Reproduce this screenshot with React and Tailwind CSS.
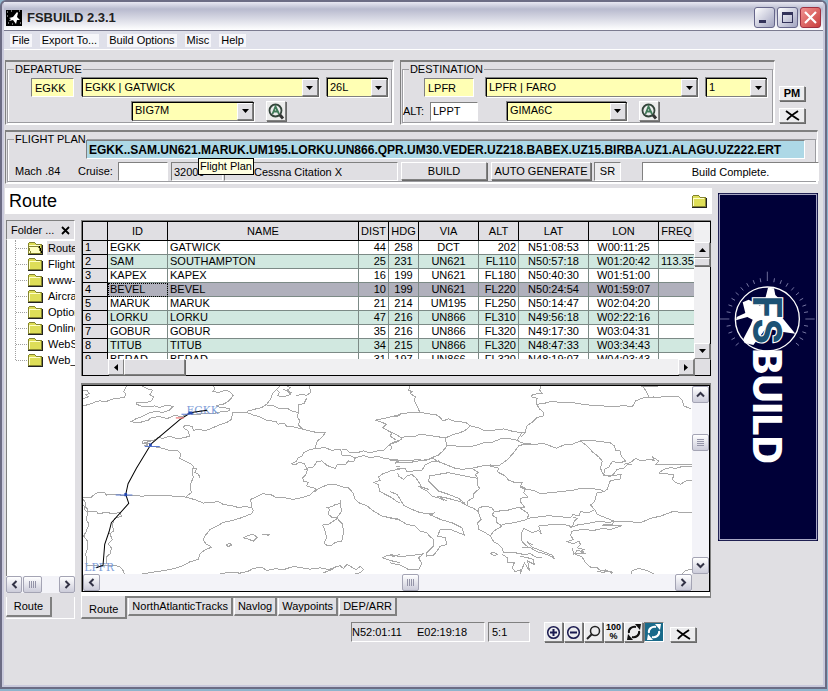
import { useState } from 'react';

const sunken = 'border border-t-[#808080] border-l-[#808080] border-r-white border-b-white';
const raised = 'border border-t-white border-l-white border-r-[#808080] border-b-[#808080] shadow-[1px_1px_0_#6a6a6a]';
const xpButton = 'flex items-center justify-center rounded-xs border border-[#a4a4b4] bg-linear-to-b from-white to-[#ccccda]';

const waypoints = [
  ['EGKK', 'GATWICK', '44', '258', 'DCT', '202', 'N51:08:53', 'W00:11:25', ''],
  ['SAM', 'SOUTHAMPTON', '25', '231', 'UN621', 'FL110', 'N50:57:18', 'W01:20:42', '113.35'],
  ['KAPEX', 'KAPEX', '16', '199', 'UN621', 'FL180', 'N50:40:30', 'W01:51:00', ''],
  ['BEVEL', 'BEVEL', '10', '199', 'UN621', 'FL220', 'N50:24:54', 'W01:59:07', ''],
  ['MARUK', 'MARUK', '21', '214', 'UM195', 'FL250', 'N50:14:47', 'W02:04:20', ''],
  ['LORKU', 'LORKU', '47', '216', 'UN866', 'FL310', 'N49:56:18', 'W02:22:16', ''],
  ['GOBUR', 'GOBUR', '35', '216', 'UN866', 'FL320', 'N49:17:30', 'W03:04:31', ''],
  ['TITUB', 'TITUB', '34', '215', 'UN866', 'FL320', 'N48:47:33', 'W03:34:43', ''],
  ['BERAD', 'BERAD', '31', '197', 'UN866', 'FL320', 'N48:19:07', 'W04:03:43', ''],
];

const columns = [
  { name: 'ID', width: 'w-[60px]', cell: 'text-left' },
  { name: 'NAME', width: '', cell: 'text-left' },
  { name: 'DIST', width: 'w-[30px]', cell: 'text-right' },
  { name: 'HDG', width: 'w-[30px]', cell: 'text-center' },
  { name: 'VIA', width: 'w-[60px]', cell: 'text-center' },
  { name: 'ALT', width: 'w-[40px]', cell: 'text-right' },
  { name: 'LAT', width: 'w-[70px]', cell: 'text-center' },
  { name: 'LON', width: 'w-[70px]', cell: 'text-center' },
  { name: 'FREQ', width: 'w-[35px]', cell: 'text-left' },
];

const folders = ['Route', 'Flight Plans', 'www-Links', 'Aircraft', 'Options', 'Online', 'WebSites', 'Web_Pages'];
const tabs = ['Route', 'NorthAtlanticTracks', 'Navlog', 'Waypoints', 'DEP/ARR'];

const Combo = ({ label, value, className }) => (
  <div className={`flex h-[19px] border border-t-black border-l-black border-r-[#404040] border-b-[#808080] bg-[#ffffb4] shadow-[1px_1px_0_#fff,-1px_-1px_0_#808080] ${className}`}>
    <select aria-label={label} className="min-w-0 flex-1 appearance-none bg-transparent pb-[2px] pl-[2px] leading-[14px] outline-none">
      <option>{value}</option>
    </select>
    <span className={`flex w-4 items-center justify-center bg-[#e0dfe3] ${raised}`}>
      <svg width="7" height="4" aria-hidden="true"><path d="M0 0h7L3.500 4z" /></svg>
    </span>
  </div>
);

const Folder = ({ open }) => (
  <svg width="16" height="14" viewBox="0 0 16 14" shapeRendering="crispEdges" aria-hidden="true" className="shrink-0">
    <path d="M1 12.500V3l2-2h4l2 2h5v9.500z" fill="#dede58" stroke="#848430" />
    <path d="M2 4h11M2 4v8" stroke="#ffffc8" fill="none" />
    <path d="M1 13h14V4" stroke="#222" fill="none" />
    {open && <path d="M1 5h10l3 7H4z" fill="#ffffc0" stroke="#848430" />}
    {open && <path d="M12 5l3 7" stroke="#000" />}
  </svg>
);

const SearchButton = ({ label }) => (
  <button aria-label={label} className={`flex size-5 items-center justify-center bg-[#ececec] ${raised}`}>
    <svg width="18" height="18" viewBox="0 0 18 18" fill="none" aria-hidden="true">
      <circle cx="8.500" cy="8.500" r="6" stroke="#33443a" strokeWidth="1.800" />
      <path d="M13 13l3 3.500" stroke="#333" strokeWidth="3" />
      <path d="M5.500 12l3-7.500L12 12M7 9.500h4" stroke="#3f7a58" strokeWidth="1.800" />
    </svg>
  </button>
);

const CrossIcon = () => (
  <svg width="15" height="11" viewBox="0 0 15 11" fill="none" stroke="#000" strokeWidth="1.800" aria-hidden="true">
    <path d="M1 1c4 3 8 6 13 9M13 1C9 4 5 6 2 10" />
  </svg>
);

const Chevron = ({ d }) => (
  <svg width="9" height="9" viewBox="0 0 9 9" fill="none" stroke="#333346" strokeWidth="2" aria-hidden="true"><path d={d} /></svg>
);

const LEFT = 'M6.500 1 3 4.500 6.500 8';
const RIGHT = 'M2.500 1 6 4.500 2.500 8';
const UP = 'M1 6.500 4.500 3 8 6.500';
const DOWN = 'M1 2.500 4.500 6 8 2.500';

const TitleBar = () => (
  <header className="flex h-[29px] items-center border-b border-[#7b7b90] bg-linear-to-b from-[#e8e8f2] via-[#b8bace] via-25% to-white px-[2px]">
    <svg width="16" height="16" viewBox="0 0 16 16" className="mt-1" aria-hidden="true">
      <path d="M0 0h16v16H0z" />
      <path d="M3 8l4-1 4-5 1 1-1 4 3 3-3 0-1 4-3-4-4 1 2-2z" fill="#fff" />
      <path d="M1 2h1M5 1h1M13 1h1M2 13h1M14 13h1M6 14h1M1 6h1" stroke="#ddd" />
    </svg>
    <h1 className="mt-1 ml-[5px] flex-1 text-[13px] font-bold text-[#222]">FSBUILD 2.3.1</h1>
    <div className="mt-[3px] flex gap-[2px]">
      <button aria-label="Minimize" className="flex size-[21px] items-end rounded-[3px] border border-[#66668a] bg-linear-to-br from-white to-[#a2a4c0] p-1">
        <span className="h-[3px] w-[7px] bg-[#33335a]" />
      </button>
      <button aria-label="Maximize" className="flex size-[21px] items-center justify-center rounded-[3px] border border-[#66668a] bg-linear-to-br from-white to-[#a2a4c0]">
        <span className="h-[11px] w-[11px] border border-t-[3px] border-[#33335a]" />
      </button>
      <button aria-label="Close" className="flex size-[21px] items-center justify-center rounded-[3px] border border-[#a03040] bg-linear-to-br from-[#f09090] to-[#c83c3c]">
        <svg width="13" height="13" viewBox="0 0 13 13" stroke="#fff" strokeWidth="2.200" aria-hidden="true"><path d="M1 1l11 11M12 1L1 12" /></svg>
      </button>
    </div>
  </header>
);

const Panel = ({ title, className, children }) => (
  <section className={`border border-t-2 border-t-[#808080] border-l-[#808080] border-r-white border-b-white p-px pt-0 ${className}`}>
    <fieldset className="min-w-0 border border-[#9c9ca0] shadow-[inset_1px_0_0_#fff,1px_1px_0_#fff]">
      <legend className="ml-[6px] px-px leading-[14px]">{title}</legend>
      {children}
    </fieldset>
  </section>
);

const FlightPlan = () => (
  <Panel title="FLIGHT PLAN" className="mt-[5px] mr-[5px]">
    <div className="relative -mt-[6px] ml-[78px] mr-[10px]">
      <input
        aria-label="Flight Plan"
        readOnly
        value="EGKK..SAM.UN621.MARUK.UM195.LORKU.UN866.QPR.UM30.VEDER.UZ218.BABEX.UZ15.BIRBA.UZ1.ALAGU.UZ222.ERT"
        className={`block h-[19px] w-full bg-[#add8e6] px-[2px] text-[12px] font-bold outline-none ${sunken}`}
      />
      <div role="tooltip" className="absolute top-[18px] left-[112px] z-10 border border-black bg-[#ffffe1] px-px leading-[15px] whitespace-nowrap">Flight Plan</div>
    </div>
    <div className="-mr-[4px] mt-[2px] flex h-[20px] items-center pl-[7px]">
      <span className="w-[63px]">Mach .84</span>
      <label htmlFor="cruise" className="w-[40px]">Cruise:</label>
      <input id="cruise" className={`h-[19px] w-[50px] bg-white px-1 outline-none ${sunken}`} />
      <span className={`ml-[3px] h-[19px] w-[52px] px-[2px] leading-[18px] ${sunken}`}>32000</span>
      <span className={`ml-px h-[19px] flex-1 pl-[29px] leading-[18px] whitespace-nowrap ${sunken}`}>Cessna Citation X</span>
      <button className={`ml-[3px] h-[18px] w-[86px] ${raised}`}>BUILD</button>
      <button className={`ml-1 h-[18px] w-[100px] whitespace-nowrap ${raised}`}>AUTO GENERATE</button>
      <button aria-pressed="true" className={`ml-[3px] h-[19px] w-[27px] bg-[#ececee] ${sunken}`}>SR</button>
      <output className={`ml-[21px] h-[19px] w-[177px] bg-white text-center leading-[18px] ${sunken}`}>Build Complete.</output>
    </div>
  </Panel>
);

const Grip = () => (
  <svg width="8" height="7" stroke="#9494a8" shapeRendering="crispEdges" aria-hidden="true"><path d="M.500 0v7M2.500 0v7M4.500 0v7M6.500 0v7" /></svg>
);

const Sidebar = () => (
  <nav className="flex w-[69px] shrink-0 flex-col">
    <div className={`flex h-[20px] items-center justify-between px-1 ${sunken}`}>
      <span>Folder ...</span>
      <button aria-label="Close folders">
        <svg width="9" height="9" viewBox="0 0 9 9" stroke="#000" strokeWidth="1.800" aria-hidden="true"><path d="M1 1l7 7M8 1L1 8" /></svg>
      </button>
    </div>
    <div className="flex-1 overflow-hidden border-l border-[#808080] bg-white">
      <ul className="ml-2 h-[120px] border-l border-dotted border-[#a0a0a0]">
        {folders.map((f, i) => (
          <li key={f} className="flex h-4 items-center">
            <span className="w-[11px] shrink-0 border-t border-dotted border-[#a0a0a0]" />
            <Folder open={i === 0} />
            <a href="#" className={i === 0 ? 'ml-1 bg-[#e0dfe3] px-px whitespace-nowrap' : 'ml-1 px-px whitespace-nowrap'}>{f}</a>
          </li>
        ))}
      </ul>
    </div>
    <div className="flex h-[17px] justify-between bg-[#f3f3f8]">
      <button aria-label="Scroll left" className={`w-4 ${xpButton}`}><Chevron d={LEFT} /></button>
      <span className={`mr-auto ml-px w-[19px] ${xpButton}`}><Grip /></span>
      <button aria-label="Scroll right" className={`w-4 ${xpButton}`}><Chevron d={RIGHT} /></button>
    </div>
    <div className="mt-1 h-[22px] border-r border-b border-white bg-[#e0dfe3]">
      <button className="h-[20px] w-[46px] border-r-2 border-b-2 border-l border-r-[#808080] border-b-[#808080] border-l-white">Route</button>
    </div>
  </nav>
);

const RouteTable = () => {
  const [selected, setSelected] = useState(3);
  const oldButton = `flex items-center justify-center bg-[#e0dfe3] ${raised}`;

  return (
    <div className="border-t border-l border-[#808080]">
      <div className="border border-black">
        <div className="flex h-[137px]">
          <div className="min-w-0 flex-1 overflow-hidden">
            <table className="w-full table-fixed border-separate border-spacing-0">
              <thead>
                <tr className="h-[19px] bg-[#e0dfe3]">
                  <th className="w-[25px] border-r border-b border-black" aria-label="Row" />
                  {columns.map((c) => (
                    <th key={c.name} className={`overflow-hidden border-r border-b border-black p-0 text-center leading-[18px] font-normal last:border-r-0 ${c.width}`}>{c.name}</th>
                  ))}
                </tr>
              </thead>
              <tbody>
                {waypoints.map((row, i) => (
                  <tr key={row[0]} onClick={() => setSelected(i)} className={i === selected ? 'bg-[#b0b0bc]' : i % 2 ? 'bg-[#d1e8e0]' : 'bg-white'}>
                    <th className="border-r border-b border-black bg-[#e0dfe3] p-0 pl-[2px] text-left leading-[13px] font-normal">{i + 1}</th>
                    {row.map((value, j) => (
                      <td
                        key={j}
                        className={`overflow-hidden border-r border-b border-[#7c8a86] p-0 px-[2px] leading-[13px] whitespace-nowrap last:border-r-0 ${columns[j].cell} ${i === selected && j === 0 ? 'outline-1 -outline-offset-1 outline-black outline-dotted' : ''}`}
                      >
                        {value}
                      </td>
                    ))}
                  </tr>
                ))}
              </tbody>
            </table>
          </div>
          <div className="flex w-4 flex-col bg-[#f0f0f2] pt-[20px]">
            <button aria-label="Scroll up" className={`h-4 ${oldButton}`}><svg width="7" height="4" aria-hidden="true"><path d="M0 4h7L3.500 0z" /></svg></button>
            <span className={`h-2 ${oldButton}`} />
            <button aria-label="Scroll down" className={`mt-auto h-4 ${oldButton}`}><svg width="7" height="4" aria-hidden="true"><path d="M0 0h7L3.500 4z" /></svg></button>
          </div>
        </div>
        <div className="flex h-4 bg-[#f0f0f2]">
          <span className="w-[25px] bg-[#e0dfe3]" />
          <button aria-label="Scroll left" className={`w-4 ${oldButton}`}><svg width="4" height="7" aria-hidden="true"><path d="M4 0v7L0 3.500z" /></svg></button>
          <span className={`w-[61px] ${oldButton}`} />
          <button aria-label="Scroll right" className={`ml-auto w-4 ${oldButton}`}><svg width="4" height="7" aria-hidden="true"><path d="M0 0v7L4 3.500z" /></svg></button>
          <span className="w-4 border-l border-[#808080] bg-[#e0dfe3]" />
        </div>
      </div>
    </div>
  );
};

// Coast lines and borders, western half
const west = [
  'M10 75L30 70 45 64 60 60 80 62 95 55 115 52 133 50 138 40 132 32 140 15',
  'M10 30L22 28 28 38 18 42 26 48 10 54',
  'M185 15L205 25 218 28 210 42 222 48 215 60 200 65 172 64 170 70 185 76 205 78 225 75 240 80 258 74 280 76 268 88 250 94 225 92 205 97 185 108 172 112 153 122 175 126 205 118 215 110 240 107 262 113 285 103 305 108 325 98 350 102 375 97 400 98 425 92 450 90 448 82 420 80 410 74 430 70 445 62 460 45 452 34 438 28 418 34 398 33 405 24 400 15',
  'M500 95L480 94 458 95 455 115 440 125 418 132 400 140 375 150 358 145 340 148 338 136 315 134 310 140 325 150 330 166 312 170 292 174 270 166 250 172 235 170 218 180 190 178 188 188 212 186 195 194 212 196 240 200 255 204 275 210 295 210 302 218 300 232 318 242 332 248 340 256 338 272 340 290 332 310 334 335 318 348',
  'M340 262L350 264 345 274 356 280 360 290M192 184L215 182M200 190L208 179',
  'M10 350L35 348 50 336 75 335 80 342 108 340 130 343 165 342 185 346 210 343 240 345 262 342 285 347 318 348 345 356 370 366 395 364 415 362 430 370 455 374 478 380 495 376 515 380',
  'M516 380L512 355 528 348 548 338 575 342 590 350 612 350 640 355 665 350 690 342 700 332 722 320 745 310 770 312 788 318 805 320 818 335 825 355 838 366 860 374 880 390 905 405 930 410 960 415',
  'M515 380L520 388 515 398 490 408 460 418 430 424 410 436 390 446 375 465 370 475 378 488 395 498 372 508 360 520 355 535 330 542 310 553 285 562 255 568 225 572 190 578 170 582',
  'M10 372L22 382 25 392 50 390 55 398 80 394 100 398 120 394 125 405 105 412 98 430 102 450 90 458 98 475 85 488 95 500 92 518 82 525 80 548',
  'M10 355L18 365 14 385 24 395 20 415 28 430 20 450 12 465 22 478 24 500 18 520 22 540 20 555 35 553 65 555 98 552 120 556 130 568 135 582',
  'M500 92L520 86 545 80 560 70 572 55 578 38 590 25 600 15M592 42L600 48 620 45 632 40 622 30 608 24M620 16L632 20 622 28 635 36M648 45L665 40 680 44 692 34 688 15M592 28L598 35 592 45',
  'M560 73L582 75 600 84 622 82 635 90 655 95 652 108 660 120 655 132 668 145 690 150 715 156 735 156 725 170 712 180 705 200',
  'M500 94L518 102 540 108 560 118 588 122 595 130 612 126 620 136 640 138 668 145M655 95L655 72 672 68 680 52',
  'M705 203L690 206 670 215 668 224 655 230 650 240 635 248 645 252 658 244 672 248 680 262 700 258 710 242 725 240 742 254 765 262 772 250 795 252 805 240 820 243 825 232 812 225 785 222 782 205 755 208 735 200 705 203',
  'M785 205L800 206 808 215 835 214 850 210 870 216 890 210 910 208 930 190 958 180M825 230L850 224 870 230 895 226 910 232 935 235 960 238',
  'M672 264L682 266 678 280 668 290 670 300 685 304 680 315 705 322 708 332',
  'M885 118L905 124 918 130 908 140 935 156 930 165 948 178M885 118L915 112 940 106 960 105',
  'M960 264L930 270 905 280 895 288 900 298 882 304 895 312 898 330 915 340 935 350 950 362 960 365M945 246L960 245M948 258L960 258',
  'M780 358L782 375 784 392 770 410 755 408 745 400 748 385 742 380 758 376 765 370 780 368z',
  'M772 412L778 420 788 430 790 455 785 480 765 484 755 492 740 492 732 486 740 470 735 450 728 432 745 430 760 420z',
  'M490 470L508 462 518 460 532 468 520 480 505 474zM438 492L448 486 456 492 445 496zM545 460L568 460 560 466',
  'M408 582L430 576 460 574 480 576 505 570 520 562 545 558 560 568 585 563 612 565 640 556 665 560 690 564 720 560 745 565 765 558 780 554 790 562 800 550 815 558 828 566 840 556 850 565 840 575 820 580M730 575L755 565 770 555',
  'M905 530L925 522 940 526 960 520M908 530L930 538 960 545',
];

// Eastern half, drawn in its own frame
const east = [
  'M60 15L55 28 65 32 60 38 75 48 72 60 80 75 88 92',
  'M0 108L18 104 35 98 65 95 88 94 110 98 138 102 150 110 158 120 175 114 195 122 225 124 240 135 262 140 285 150 310 148 340 144 370 152 395 155 406 153',
  'M0 152L20 162 35 172 45 166 70 168 90 160 120 164 145 168 168 170 185 162 210 155 225 148 240 135',
  'M0 208L5 200 0 190 10 184 35 175M0 238L30 238 52 240 85 235 105 240 125 230 145 222 158 210 170 195 165 172',
  'M170 195L195 195 220 198 250 195 280 186 305 184 330 174 350 172 380 178 388 166 395 155',
  'M380 178L395 186 430 190 400 190 385 195 370 215 352 235 325 255 300 252 275 255 245 262 215 265 195 262 165 250 140 240 125 230',
  'M452 15L448 28 455 38 428 40 422 48 440 52 438 70 448 85 460 95 460 105 440 110 428 122 408 136 405 155 392 168',
  'M438 70L460 68 480 62 510 64 550 66 590 72 615 74 650 76 670 78 700 74 725 78 735 60 760 50 800 50 830 46 862 46 875 58 880 75 902 85M755 15L768 32 775 50 790 48M750 18L780 16 802 18',
  'M400 188L430 190 460 188 480 195 498 202 520 192 545 190 570 180 600 178 630 182 660 186 672 195 675 208 688 210 692 225 705 240 690 245 665 242 655 258 642 265 640 280 650 285 665 284 680 265 700 262 712 250 725 252',
  'M570 180L590 195 605 212 625 228 635 240 630 262 640 285',
  'M700 250L720 245 735 232 752 240 775 235 790 238 786 228 795 234 805 240 795 252 815 250 840 250 870 252 903 250',
  'M903 258L870 258 855 262 840 260 820 265 805 276 825 278 850 282 845 295 855 305 870 310 885 300 903 298',
  'M640 282L655 286 680 282 692 280 688 295 660 298 655 310 650 325 640 332 620 335 615 350 612 362 600 372 612 385 620 400 645 410 670 420 700 420 750 425 780 412 810 405 845 392 903 395',
  'M390 318L405 325 430 328 450 338 480 335 510 332 545 328 570 322 600 322 630 326 640 332',
  'M300 255L325 262 320 272 345 285 355 298 375 305 395 305 390 315 405 322 400 335 412 348 390 352 392 365 402 378 390 382 410 395 415 402 410 412',
  'M325 390L350 388 380 380 400 380M410 412L440 408 475 404 500 406 540 410 548 400 565 405 570 392 595 395 612 386',
  'M15 250L18 242 50 246 85 240 130 232M20 262L45 262 50 272 70 270 95 268 105 252 125 242 145 240',
  'M22 275L25 285 40 295 50 285 65 280 78 292 90 310 90 320 110 330 125 345 150 352 165 350 185 355 210 362 230 374 250 382 265 392',
  'M118 285L145 280 175 275 200 280 240 288 262 292 260 312 268 322 250 338 250 350 232 360 230 372M118 285L115 300 130 315 145 330 175 340 205 352 225 368M85 315L115 325M140 345L165 350M145 352L170 358M150 346L160 360',
  'M245 262L265 275 255 280 262 292M265 380L285 375 305 380 312 392 305 402 318 410 320 425 335 435 310 450 300 465 285 455 265 445 262 425 272 415 265 395 265 380M312 392L330 390',
  'M335 430L370 425 410 415M300 465L310 482 325 490 335 500 340 515 370 514 400 520 420 518 440 530 455 528M300 516L312 514 320 520 310 524z',
  'M335 520L352 530 350 545 372 545 365 560 375 572 392 565 390 578 402 545 418 570 412 540 432 550 428 535 412 530 390 525',
  'M415 500L395 482 392 460 400 442 412 448 425 455 445 448 452 458 445 435 470 432 500 430 530 432 545 438 552 420 560 412 548 408',
  'M395 500L420 500 440 512 470 520 492 532 485 522 450 508 425 498 410 482 428 492',
  'M540 440L560 432 585 428 610 424 625 420 650 424 670 422 665 430 635 432 695 434 660 445 635 442 610 448 575 445 545 450 540 462 548 475 530 482 550 488 565 480 570 490 560 500 580 505 570 512 585 518 548 516 575 528 585 545 600 558 620 560 630 568 665 572M545 500L550 520 560 508 580 512',
  'M720 582L725 568 745 562 770 568 792 580M870 582L885 568 903 564M620 570L640 575 645 566 665 575 662 582',
  'M0 332L20 340 30 355 40 372 65 385 90 395 115 398 150 415 185 425 215 440 222 462 205 455 180 445 150 445 142 465 165 470 170 490 150 495 140 510 130 522 108 525 110 515 130 495 130 475 118 465 110 455 90 450 75 435 50 430 25 415 0 412',
  'M100 518L85 530 95 548 85 566 55 565 30 552 0 545M0 520L25 526 60 524 100 518M115 398L130 396 120 405',
];

const RouteMap = () => (
  <svg viewBox="10 15 1824 564" preserveAspectRatio="xMidYMid slice" className="h-[188px] min-w-0 flex-1 bg-white" role="img" aria-label="Route map" fill="none">
    <g stroke="#a8a8a8" strokeWidth="3" shapeRendering="crispEdges">
      {west.map((d, i) => <path key={i} d={d} />)}
      <g transform="translate(930 0)">
        {east.map((d, i) => <path key={i} d={d} />)}
      </g>
    </g>
    <g fill="#7b9bd8" fontFamily="'DejaVu Serif', serif" fontSize="32">
      <text x="320" y="98">EGKK</text>
      <text x="14" y="571">LPFR</text>
    </g>
    <path d="M382 88L340 94 325 100 300 116 215 188 170 262 145 308 138 340 147 367 95 425 88 452 75 490 70 552 50 560" stroke="#000" strokeWidth="3" />
    <path d="M108 342h50M195 197h45M305 100h35" stroke="#5a7ad0" strokeWidth="3" />
    <path d="M288 111h24" stroke="#f08080" strokeWidth="4" />
    <path d="M134 336h8v10h-8zM208 188h8v8h-8zM326 92h12v7h-12z" fill="#2448b0" />
  </svg>
);

const MapPanel = () => (
  <div className="border-t-2 border-l border-[#808080]">
    <div className="border border-black bg-white">
      <div className="flex">
        <RouteMap />
        <div className="flex w-[17px] flex-col bg-[#f3f3f8]">
          <button aria-label="Map up" className={`h-[17px] ${xpButton}`}><Chevron d={UP} /></button>
          <span className={`mt-[31px] h-[17px] ${xpButton}`}>
            <svg width="7" height="8" stroke="#9494a8" shapeRendering="crispEdges" aria-hidden="true"><path d="M0 .500h7M0 2.500h7M0 4.500h7M0 6.500h7" /></svg>
          </span>
          <button aria-label="Map down" className={`mt-auto h-[17px] ${xpButton}`}><Chevron d={DOWN} /></button>
        </div>
      </div>
      <div className="flex h-[17px] items-stretch bg-[#f3f3f8]">
        <button aria-label="Map left" className={`w-[17px] ${xpButton}`}><Chevron d={LEFT} /></button>
        <div className="flex flex-1 justify-center pl-[46px]"><span className={`w-[17px] ${xpButton}`}><Grip /></span></div>
        <button aria-label="Map right" className={`w-[17px] ${xpButton}`}><Chevron d={RIGHT} /></button>
        <span className="w-[17px] bg-[#e0dfe3]" />
      </div>
    </div>
  </div>
);

const Arrows = ({ color }) => (
  <svg width="16" height="16" viewBox="0 0 16 16" fill="none" stroke={color} strokeWidth="2" aria-hidden="true">
    <path d="M3 9C2 5 6 2 10 3M13 7c1 4-3 7-7 6" />
    <path d="M9 0l6 0-1 6zM7 16l-6 0 1-6z" fill={color} stroke="none" />
  </svg>
);

const StatusBar = () => {
  const tool = `flex h-5 w-[19px] items-center justify-center overflow-hidden bg-[#ececee] ${raised}`;

  return (
    <div className="mt-[3px] flex items-end justify-end pr-4">
      <output className={`flex h-5 w-[134px] items-center gap-[15px] ${sunken}`}><span>N52:01:11</span><span>E02:19:18</span></output>
      <output className={`ml-[3px] flex h-5 w-[42px] items-center pl-[3px] ${sunken}`}>5:1</output>
      <div className="ml-[14px] flex gap-px">
        <button aria-label="Zoom in" className={tool}>
          <svg width="15" height="15" viewBox="0 0 15 15" fill="none" stroke="#1a1a50" strokeWidth="1.500" aria-hidden="true"><circle cx="7.500" cy="7.500" r="5.800" /><path d="M4 7.500h7M7.500 4v7" strokeWidth="2" /></svg>
        </button>
        <button aria-label="Zoom out" className={tool}>
          <svg width="15" height="15" viewBox="0 0 15 15" fill="none" stroke="#1a1a50" strokeWidth="1.500" aria-hidden="true"><circle cx="7.500" cy="7.500" r="5.800" /><path d="M4 7.500h7" strokeWidth="2" /></svg>
        </button>
        <button aria-label="Zoom window" className={tool}>
          <svg width="15" height="15" viewBox="0 0 15 15" fill="none" stroke="#222" strokeWidth="1.500" aria-hidden="true"><circle cx="9" cy="6" r="4.500" /><path d="M6 9l-5 5" strokeWidth="2" /></svg>
        </button>
        <button aria-label="Zoom 100%" className={`${tool} flex-col text-[9px] leading-[9px] font-bold`}><span>100</span><span>%</span></button>
        <button aria-label="Refresh" className={tool}><Arrows color="#111" /></button>
        <button aria-label="Auto refresh" aria-pressed="true" className={`flex size-5 items-center justify-center bg-[#1a6a8a] ${sunken}`}><Arrows color="#fff" /></button>
      </div>
      <button aria-label="Close route" className={`ml-[6px] flex h-[15px] w-[26px] items-center justify-center bg-[#ececee] ${raised}`}><CrossIcon /></button>
    </div>
  );
};

const Banner = () => (
  <aside className="w-[111px] shrink-0 pt-[5px] pr-[5px] pl-[6px]">
    <svg viewBox="24 24 300 1044" className="w-full" role="img" aria-label="FSBuild">
      <path d="M24 24h300v1044H24z" fill="#000038" />
      <path d="M28 28h292v1036H28z" fill="none" stroke="#c8c8e0" strokeWidth="3" />
      <g stroke="#a0a0c8" strokeWidth="2">
        {Array.from({ length: 36 }, (_, i) => i).filter((i) => i < 14 || i > 22).map((i) => (
          <path key={i} d={i % 9 === 0 ? 'M172 260V288' : 'M172 278V290'} transform={`rotate(${i * 10} 172 402)`} />
        ))}
      </g>
      <circle cx="172" cy="402" r="96" fill="#000038" stroke="#fff" strokeWidth="4" />
      <path d="M174 308L192 310 196 330 212 345 218 400 256 446 215 440 168 430 130 480 104 474 100 462 122 420 128 404 112 396 78 406 80 396 106 384 98 352 116 344 150 362 166 340z" fill="#fff" />
      <g fontFamily="Inter, sans-serif" fontSize="117">
        <text transform="translate(130 332) rotate(90)" fontWeight="700" fill="#1c5274" stroke="#fff" strokeWidth="7" paintOrder="stroke">FS</text>
        <text transform="translate(130 490) rotate(90)" fontWeight="800" fill="#fff">BUILD</text>
      </g>
    </svg>
  </aside>
);

const App = () => {
  const [tab, setTab] = useState('Route');

  return (
    <div className="min-h-screen bg-[#8fb4cc] pr-px pb-[2px] font-['Liberation_Sans',Arial,sans-serif] text-[11px] leading-[14px] text-black">
      <div className="flex min-h-[calc(100vh-2px)] flex-col rounded-t-md border-2 border-[#6c6c84] bg-[#c9c9dc] px-[2px] pb-[2px]">
        <TitleBar />
        <nav className="flex h-[19px] items-center gap-2 border-b border-white bg-[#dfe0ea] pl-[6px]">
          {['File', 'Export To...', 'Build Options', 'Misc', 'Help'].map((item) => (
            <button key={item} className="bg-[#f6f6fa] px-[2px] leading-[13px]">{item}</button>
          ))}
        </nav>

        <main className="flex-1 bg-[#e0dfe3] pt-[10px] pl-px">
          <div className="flex">
            <Panel title="DEPARTURE" className="flex-[389_1_0px]">
              <div className="flex gap-2 pt-[2px] pr-[3px] pl-[23px]">
                <input aria-label="Departure airport" defaultValue="EGKK" className={`h-[19px] w-[43px] bg-[#ffffb4] px-[3px] outline-none ${sunken}`} />
                <Combo label="Departure name" value="EGKK | GATWICK" className="min-w-0 flex-1" />
                <Combo label="Departure runway" value="26L" className="w-[61px]" />
              </div>
              <div className="mt-1 flex items-center gap-3 pb-px pl-[124px]">
                <Combo label="SID" value="BIG7M" className="w-[122px]" />
                <SearchButton label="Find SID" />
              </div>
            </Panel>
            <Panel title="DESTINATION" className="ml-[6px] flex-[375_1_0px]">
              <div className="flex gap-2 pt-[2px] pr-[5px] pl-[21px]">
                <input aria-label="Destination airport" defaultValue="LPFR" className={`mr-1 h-[19px] w-[50px] bg-[#ffffb4] px-[3px] outline-none ${sunken}`} />
                <Combo label="Destination name" value="LPFR | FARO" className="min-w-0 flex-1" />
                <Combo label="Destination runway" value="1" className="w-[61px]" />
              </div>
              <div className="mt-1 flex items-center pb-px">
                <label htmlFor="alt" className="w-[27px]">ALT:</label>
                <input id="alt" defaultValue="LPPT" className={`h-[19px] w-[48px] bg-white px-[2px] outline-none ${sunken}`} />
                <Combo label="STAR" value="GIMA6C" className="mr-3 ml-[29px] w-[120px]" />
                <SearchButton label="Find STAR" />
              </div>
            </Panel>
            <div className="mr-[18px] ml-1 flex w-[26px] flex-col justify-end gap-[7px] pb-[2px]">
              <button className={`h-[15px] bg-[#ececee] leading-[13px] font-bold ${raised}`}>PM</button>
              <button aria-label="Clear" className={`flex h-[15px] items-center justify-center bg-[#ececee] ${raised}`}><CrossIcon /></button>
            </div>
          </div>

          <FlightPlan />

          <div className="mt-1 flex">
            <div className="min-w-0 flex-1">
              <div className="flex h-[26px] items-center justify-between bg-white pr-[5px] pl-1">
                <h2 className="text-[18px] leading-[26px]">Route</h2>
                <Folder />
              </div>
              <div className="mt-[6px] flex pl-px">
                <Sidebar />
                <div className="ml-[6px] min-w-0 flex-1 pr-px">
                  <RouteTable />
                  <div className="mt-[7px] border-r border-b-2 border-[#808080] pb-1 shadow-[inset_0_-4px_0_#fff]">
                    <MapPanel />
                  </div>
                  <div className="flex items-start gap-px">
                    {tabs.map((t) => (
                      <button
                        key={t}
                        onClick={() => setTab(t)}
                        className={`border-r-2 border-b-2 border-l border-r-[#808080] border-b-[#808080] border-l-white ${t === tab ? '-mt-[2px] h-[23px] bg-[#e0dfe3] px-[7px] pt-1' : 'h-[18px] px-[3px]'}`}
                      >
                        {t}
                      </button>
                    ))}
                  </div>
                </div>
              </div>
              <StatusBar />
            </div>
            <Banner />
          </div>
        </main>
      </div>
    </div>
  );
};

export default App;
